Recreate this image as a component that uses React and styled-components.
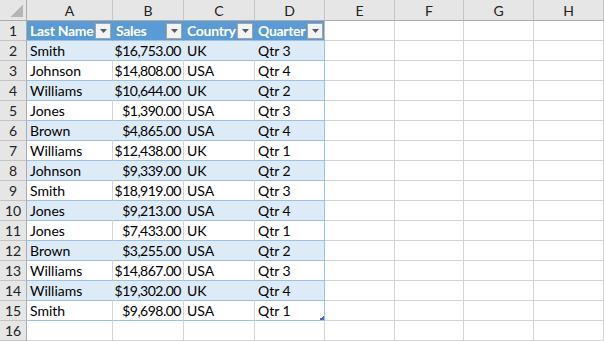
import React from 'react'
import styled, { createGlobalStyle } from 'styled-components'

const Global = createGlobalStyle`
  html, body { margin: 0; padding: 0; background: #fff; }
  body { font-family: Lato, "Open Sans", sans-serif; }
`

const Sheet = styled.div`
  display: grid;
  grid-template-columns: 27px 86px 71px 71px 70px 70px 69px 70px 1fr;
  grid-template-rows: 21px repeat(16, 20px);
  width: 604px;
  height: 341px;
  overflow: hidden;
  font-size: 14px;
  color: #000;
`

const Corner = styled.div`
  box-sizing: border-box;
  background: #e6e6e6 linear-gradient(135deg, transparent 50%, #b5b5b5 50%) no-repeat right 3px bottom 3px / 12px 12px;
  border-right: 1px solid #ababab;
  border-bottom: 1px solid #ababab;
`

const ColHead = styled.div`
  box-sizing: border-box;
  background: #e6e6e6;
  border-right: 1px solid #c4c4c4;
  border-bottom: 1px solid #ababab;
  display: flex;
  align-items: center;
  justify-content: center;
  color: #222;
  font-size: 14px;
`

const RowHead = styled.div`
  box-sizing: border-box;
  background: #e6e6e6;
  border-right: 1px solid #ababab;
  border-bottom: 1px solid #c4c4c4;
  display: flex;
  align-items: center;
  justify-content: center;
  color: #222;
`

const Cell = styled.div`
  box-sizing: border-box;
  display: flex;
  align-items: center;
  justify-content: ${p => (p.$num ? 'flex-end' : 'flex-start')};
  padding: ${p => (p.$num ? '0 2px 0 0' : '0 0 0 3px')};
  white-space: nowrap;
  overflow: hidden;
  background: ${p => (p.$head ? '#5b9bd5' : p.$band ? '#ddebf7' : '#fff')};
  color: ${p => (p.$head ? '#fff' : '#000')};
  font-weight: ${p => (p.$head ? 700 : 400)};
  letter-spacing: ${p => (p.$num ? '-0.5px' : p.$head ? '-0.3px' : '0')};
  border-bottom: 1px solid ${p => (p.$table ? '#9bc2e6' : '#d4d4d4')};
  border-right: 1px solid
    ${p => (p.$edge ? '#9bc2e6' : p.$head ? '#5b9bd5' : p.$band ? '#ddebf7' : '#d4d4d4')};
  ${p =>
    p.$handle &&
    `background: #fff linear-gradient(135deg, transparent 50%, #4466bb 50%) no-repeat right 0 bottom 0 / 5px 5px;`}
`

const Label = styled.span`
  flex: 1;
  overflow: hidden;
`

const Filter = styled.span`
  flex: none;
  box-sizing: border-box;
  width: 16px;
  height: 16px;
  margin-right: 1px;
  background: #f3f3f3;
  border: 1px solid #a3a3a3;
  display: flex;
  align-items: center;
  justify-content: center;
`

const FilterButton = () => (
  <Filter>
    <svg width="7" height="4" viewBox="0 0 7 4">
      <polygon points="0,0 7,0 3.5,4" fill="#595959" />
    </svg>
  </Filter>
)

const rows = [
  ['Smith', '$16,753.00', 'UK', 'Qtr 3'],
  ['Johnson', '$14,808.00', 'USA', 'Qtr 4'],
  ['Williams', '$10,644.00', 'UK', 'Qtr 2'],
  ['Jones', '$1,390.00', 'USA', 'Qtr 3'],
  ['Brown', '$4,865.00', 'USA', 'Qtr 4'],
  ['Williams', '$12,438.00', 'UK', 'Qtr 1'],
  ['Johnson', '$9,339.00', 'UK', 'Qtr 2'],
  ['Smith', '$18,919.00', 'USA', 'Qtr 3'],
  ['Jones', '$9,213.00', 'USA', 'Qtr 4'],
  ['Jones', '$7,433.00', 'UK', 'Qtr 1'],
  ['Brown', '$3,255.00', 'USA', 'Qtr 2'],
  ['Williams', '$14,867.00', 'USA', 'Qtr 3'],
  ['Williams', '$19,302.00', 'UK', 'Qtr 4'],
  ['Smith', '$9,698.00', 'USA', 'Qtr 1'],
]

const headers = ['Last Name', 'Sales', 'Country', 'Quarter']
const letters = ['A', 'B', 'C', 'D', 'E', 'F', 'G', 'H']

// empty cells E..H
const Blank = () => (
  <>
    {[0, 1, 2, 3].map(i => (
      <Cell key={i} />
    ))}
  </>
)

export default function App() {
  return (
    <>
      <Global />
      <Sheet>
        <Corner />
        {letters.map(l => (
          <ColHead key={l}>{l}</ColHead>
        ))}

        <RowHead>1</RowHead>
        {headers.map((h, i) => (
          <Cell key={h} $head $table $edge={i === 3}>
            <Label>{h}</Label>
            <FilterButton />
          </Cell>
        ))}
        <Blank />

        {rows.map((r, i) => {
          const band = i % 2 === 0
          const last = i === rows.length - 1
          return (
            <React.Fragment key={i}>
              <RowHead>{i + 2}</RowHead>
              <Cell $band={band} $table>{r[0]}</Cell>
              <Cell $band={band} $table $num>{r[1]}</Cell>
              <Cell $band={band} $table>{r[2]}</Cell>
              <Cell $band={band} $table $edge $handle={last}>{r[3]}</Cell>
              <Blank />
            </React.Fragment>
          )
        })}

        <RowHead>16</RowHead>
        {[0, 1, 2, 3].map(i => (
          <Cell key={i} />
        ))}
        <Blank />
      </Sheet>
    </>
  )
}
